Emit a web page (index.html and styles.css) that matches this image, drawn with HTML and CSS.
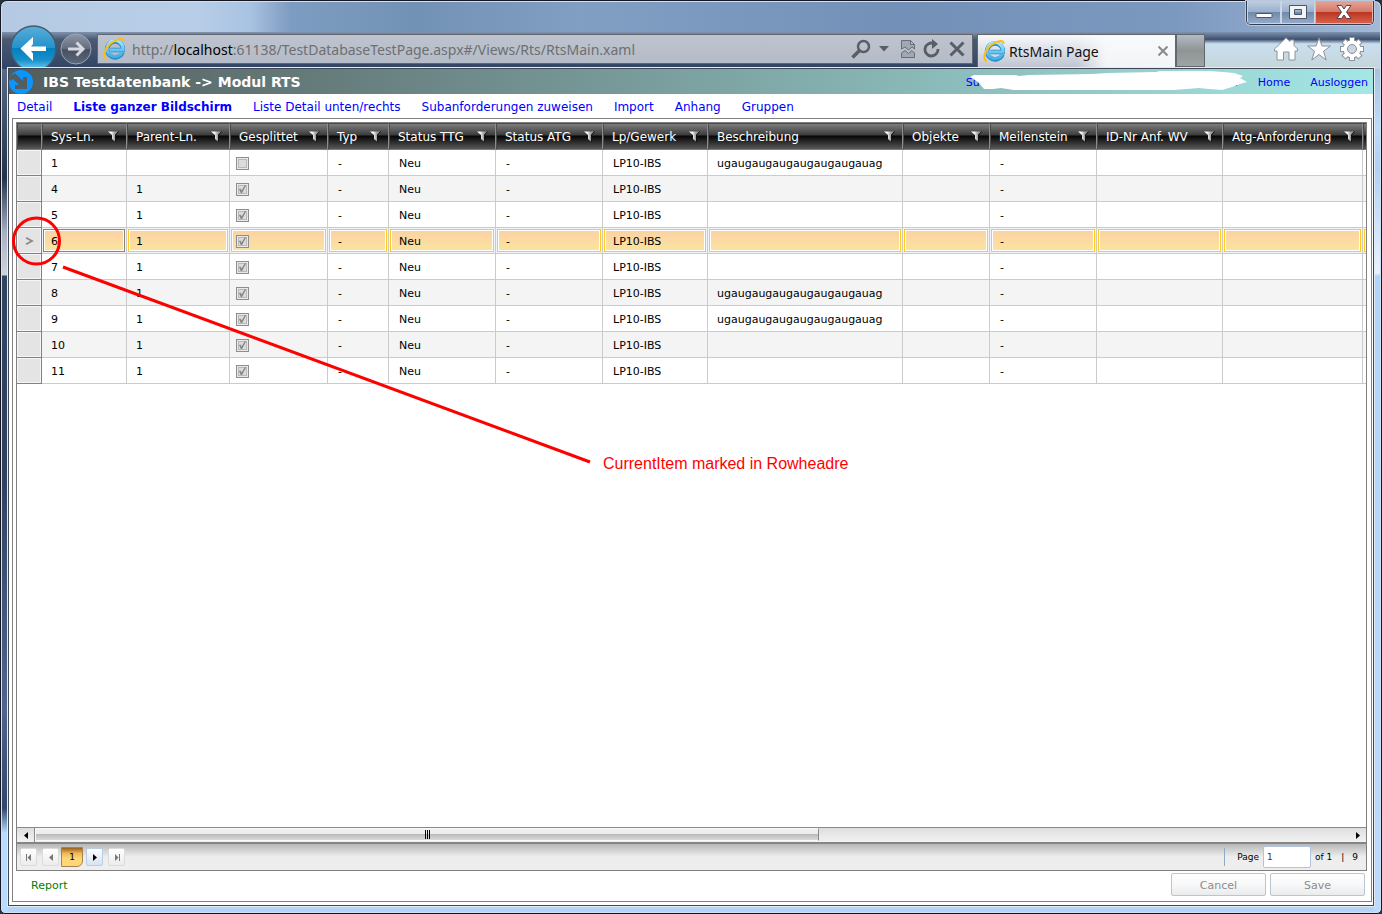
FILE: index.html
```
<!DOCTYPE html>
<html lang="de">
<head>
    <meta charset="UTF-8">
    <meta name="viewport" content="width=device-width, initial-scale=1.0">
    <title>RtsMain Page</title>
    <link rel="stylesheet" href="styles.css">
</head>
<body>
    <!-- Shared icons -->
    <svg class="defs" width="0" height="0" aria-hidden="true">
        <defs>
            <linearGradient id="funnelFill"><stop offset="0.3" stop-color="#fff"/><stop offset="0.7" stop-color="#999"/></linearGradient>
            <linearGradient id="backFill" x2="0" y2="1"><stop offset="0" stop-color="#5aaed8"/><stop offset="0.48" stop-color="#2492cb"/><stop offset="0.5" stop-color="#0480bf"/><stop offset="0.75" stop-color="#1590cb"/><stop offset="1" stop-color="#7fd2f3"/></linearGradient>
            <linearGradient id="forwardFill" x2="0" y2="1"><stop offset="0" stop-color="#8d98a8"/><stop offset="0.5" stop-color="#626b7b"/><stop offset="0.52" stop-color="#465061"/><stop offset="1" stop-color="#5c687c"/></linearGradient>
            <linearGradient id="ieFill" x2="0" y2="1"><stop offset="0" stop-color="#a5e6fd"/><stop offset="1" stop-color="#3fb0ea"/></linearGradient>
            <symbol id="funnel" viewBox="0 0 11 11">
                <path d="M0 0.5h10L7 4v6.500L4 8V4z" fill="url(#funnelFill)"/>
                <path d="M10.500 0.500L7.500 4v7" fill="none" stroke="#111"/>
            </symbol>
            <symbol id="ie" viewBox="0 0 22 22">
                <path d="M19.500 14.500a8 8 0 1 1 .6-3.500v1H7.500" fill="none" stroke="#2b8ccb" stroke-width="4.500"/>
                <path d="M19 14.500a8 8 0 1 1 1-3.500v1H7.500" fill="none" stroke="url(#ieFill)" stroke-width="3"/>
                <path d="M4 20.500C-1 21 1 10 9 4.500 15 .5 21-.5 20.500 4" fill="none" stroke="#f9bf16" stroke-width="2"/>
            </symbol>
        </defs>
    </svg>

    <div class="window">
        <div class="titlebar">
            <div class="caption-buttons">
                <button type="button" class="minimize" aria-label="Minimize">
                    <svg width="18" height="14"><rect x="1" y="8.500" width="16" height="4" rx="1" fill="#fff" stroke="#4c566b"/></svg>
                </button>
                <button type="button" class="maximize" aria-label="Maximize">
                    <svg width="18" height="14"><path d="M.5.5h17v13H.5zM5.500 4.500v5h7v-5z" fill="#f4f4f4" fill-rule="evenodd" stroke="#4c566b"/></svg>
                </button>
                <button type="button" class="close" aria-label="Close">
                    <svg width="16" height="14"><path d="M1 .5h4.500L8 4l2.500-3.500H15L10.500 7l4.500 6.500h-4.500L8 10l-2.500 3.500H1L5.500 7z" fill="#fff" stroke="#5b4150"/></svg>
                </button>
            </div>
        </div>

        <div class="toolbar">
            <button type="button" class="back" aria-label="Back">
                <svg width="47" height="47" viewBox="0 0 47 47">
                    <circle cx="23.500" cy="23.500" r="22.500" fill="url(#backFill)" stroke="#47596f" stroke-width="1.500"/>
                    <path d="M10.500 23.500L23 12v7l-2 2.500h15v4.500H21l2 2.500V36z" fill="#fff"/>
                </svg>
            </button>
            <button type="button" class="forward" aria-label="Forward">
                <svg width="32" height="32" viewBox="0 0 32 32">
                    <circle cx="16" cy="16" r="15" fill="url(#forwardFill)" stroke="#9aa3b1"/>
                    <path d="M8 16h14M16.500 9.500L23 16l-6.500 6.500" fill="none" stroke="#d5d8de" stroke-width="3"/>
                </svg>
            </button>
            <div class="address">
                <svg class="ie-icon" width="22" height="22"><use href="#ie"/></svg>
                <div class="url">http://<b>localhost</b>:61138/TestDatabaseTestPage.aspx#/Views/Rts/RtsMain.xaml</div>
                <button type="button" aria-label="Search">
                    <svg width="20" height="20"><circle cx="12.500" cy="7.500" r="5.500" fill="none" stroke="#585d66" stroke-width="2.500"/><path d="M8.500 11.500L1.500 18.500" stroke="#585d66" stroke-width="3.500"/></svg>
                </button>
                <button type="button" class="dropdown" aria-label="Show address bar history">
                    <svg width="10" height="6"><path d="M0 0h10L5 5.500z" fill="#585d66"/></svg>
                </button>
                <button type="button" aria-label="Compatibility view">
                    <svg width="14" height="18"><path d="M.5 9V.5h9l4 4V9l-2.500-2L7.500 10 4 7zM9.500.5v4h4M.5 17.500V13L4 10.500 7.500 13.500 11 10.500l2.500 2.500v4.500z" fill="#a2a8b1" stroke="#686d76"/></svg>
                </button>
                <button type="button" aria-label="Refresh">
                    <svg width="18" height="20"><path d="M11 4.500A6.500 6.500 0 1 0 15 10" fill="none" stroke="#585d66" stroke-width="2.800"/><path d="M9 0l6 5-6 5z" fill="#585d66"/></svg>
                </button>
                <button type="button" aria-label="Stop">
                    <svg width="16" height="16"><path d="M1.500 1.500l13 13M14.500 1.500l-13 13" stroke="#585d66" stroke-width="3"/></svg>
                </button>
            </div>
            <div class="tab">
                <svg class="ie-icon" width="22" height="22"><use href="#ie"/></svg>
                <span>RtsMain Page</span>
                <button type="button" aria-label="Close tab">
                    <svg width="10" height="10"><path d="M.5.5l9 9M9.500.5l-9 9" stroke="#8a8a8a" stroke-width="2"/></svg>
                </button>
            </div>
            <button type="button" class="new-tab" aria-label="New tab"></button>
            <div class="tools">
                <button type="button" aria-label="Home">
                    <svg width="24" height="24"><path d="M12 .8L16 4.500V3h4v5.500l3.500 3.500v2H21v9h-6v-8H9.500v8H3v-9H.5v-2z" fill="#fff" stroke="#8b939c"/></svg>
                </button>
                <button type="button" aria-label="Favorites">
                    <svg width="24" height="24"><path d="M12 1l3 8h8.500l-7 5.200 2.700 8.800L12 17.500 4.800 23l2.700-8.800L.5 9H9z" fill="#fff" stroke="#8b939c"/></svg>
                </button>
                <button type="button" aria-label="Tools">
                    <svg width="24" height="24">
                        <g stroke="#8b939c" stroke-width="6"><path d="M12 0v24M0 12h24M3.500 3.500l17 17M20.500 3.500l-17 17"/></g>
                        <circle cx="12" cy="12" r="9.500" fill="#8b939c"/>
                        <g stroke="#fff" stroke-width="4"><path d="M12 1v22M1 12h22M4.200 4.200l15.600 15.600M19.800 4.200L4.200 19.800"/></g>
                        <circle cx="12" cy="12" r="8.500" fill="#fff"/>
                        <circle cx="12" cy="12" r="4.500" fill="#c9d6e0" stroke="#8b939c"/>
                    </svg>
                </button>
            </div>
        </div>

        <div class="page">
            <header>
                <svg class="logo" width="24" height="24">
                    <circle cx="12" cy="12" r="12" fill="#0a95ff"/>
                    <path d="M0 9V7l6-4 8 8V7h4v12H6v-4h4L4 9l-2 2z" fill="#545e5e"/>
                </svg>
                <h1>IBS Testdatenbank -&gt; Modul RTS</h1>
                <div class="user">
                    <span>Su</span><span>n</span>
                    <svg width="280" height="22" viewBox="0 0 280 22">
                        <path d="M2 6l4-2h42l3 1 10-1 63-1 16-1 48-1 8-2 20 1 8-1 9-1 8 2 14 1 11 1 9 3-3 2 7 4-7 2-8 3-10 3-13-1-10-1-12 1-13 1H60l-14 0-13-2-8 1-9 0-5-6-5-4z" fill="#fff"/>
                    </svg>
                </div>
                <a href="#home">Home</a>
                <a href="#logout">Ausloggen</a>
            </header>

            <nav>
                <a href="#detail">Detail</a>
                <a href="#liste" class="active">Liste ganzer Bildschirm</a>
                <a href="#liste-detail">Liste Detail unten/rechts</a>
                <a href="#subanforderungen">Subanforderungen zuweisen</a>
                <a href="#import">Import</a>
                <a href="#anhang">Anhang</a>
                <a href="#gruppen">Gruppen</a>
            </nav>

            <main>
                <div class="grid">
                    <div class="grid-view">
                        <table>
                            <colgroup>
                                <col class="c-head"><col class="c-sys"><col class="c-parent"><col class="c-split"><col class="c-typ"><col class="c-status"><col class="c-status"><col class="c-lp"><col class="c-text"><col class="c-obj"><col class="c-status"><col class="c-id"><col class="c-atg"><col class="c-rest">
                            </colgroup>
                            <thead>
                                <tr>
                                    <th></th>
                                    <th><div>Sys-Ln.<svg><use href="#funnel"/></svg></div></th>
                                    <th><div>Parent-Ln.<svg><use href="#funnel"/></svg></div></th>
                                    <th><div>Gesplittet<svg><use href="#funnel"/></svg></div></th>
                                    <th><div>Typ<svg><use href="#funnel"/></svg></div></th>
                                    <th><div>Status TTG<svg><use href="#funnel"/></svg></div></th>
                                    <th><div>Status ATG<svg><use href="#funnel"/></svg></div></th>
                                    <th><div>Lp/Gewerk<svg><use href="#funnel"/></svg></div></th>
                                    <th><div>Beschreibung<svg><use href="#funnel"/></svg></div></th>
                                    <th><div>Objekte<svg><use href="#funnel"/></svg></div></th>
                                    <th><div>Meilenstein<svg><use href="#funnel"/></svg></div></th>
                                    <th><div>ID-Nr Anf. WV<svg><use href="#funnel"/></svg></div></th>
                                    <th><div>Atg-Anforderung<svg><use href="#funnel"/></svg></div></th>
                                    <th></th>
                                </tr>
                            </thead>
                            <tbody>
                                <tr><th></th><td>1</td><td></td><td><input type="checkbox" aria-label="Gesplittet" disabled></td><td>-</td><td>Neu</td><td>-</td><td>LP10-IBS</td><td>ugaugaugaugaugaugaugauag</td><td></td><td>-</td><td></td><td></td><td></td></tr>
                                <tr><th></th><td>4</td><td>1</td><td><input type="checkbox" aria-label="Gesplittet" checked disabled></td><td>-</td><td>Neu</td><td>-</td><td>LP10-IBS</td><td></td><td></td><td>-</td><td></td><td></td><td></td></tr>
                                <tr><th></th><td>5</td><td>1</td><td><input type="checkbox" aria-label="Gesplittet" checked disabled></td><td>-</td><td>Neu</td><td>-</td><td>LP10-IBS</td><td></td><td></td><td>-</td><td></td><td></td><td></td></tr>
                                <tr class="current"><th><svg width="9" height="8"><path d="M1 .8L7 4 1 7.200" fill="none" stroke="#8a8a8a" stroke-width="1.800"/></svg></th><td class="focus">6</td><td>1</td><td><input type="checkbox" aria-label="Gesplittet" checked disabled></td><td>-</td><td>Neu</td><td>-</td><td>LP10-IBS</td><td></td><td></td><td>-</td><td></td><td></td><td></td></tr>
                                <tr><th></th><td>7</td><td>1</td><td><input type="checkbox" aria-label="Gesplittet" checked disabled></td><td>-</td><td>Neu</td><td>-</td><td>LP10-IBS</td><td></td><td></td><td>-</td><td></td><td></td><td></td></tr>
                                <tr><th></th><td>8</td><td>1</td><td><input type="checkbox" aria-label="Gesplittet" checked disabled></td><td>-</td><td>Neu</td><td>-</td><td>LP10-IBS</td><td>ugaugaugaugaugaugaugauag</td><td></td><td>-</td><td></td><td></td><td></td></tr>
                                <tr><th></th><td>9</td><td>1</td><td><input type="checkbox" aria-label="Gesplittet" checked disabled></td><td>-</td><td>Neu</td><td>-</td><td>LP10-IBS</td><td>ugaugaugaugaugaugaugauag</td><td></td><td>-</td><td></td><td></td><td></td></tr>
                                <tr><th></th><td>10</td><td>1</td><td><input type="checkbox" aria-label="Gesplittet" checked disabled></td><td>-</td><td>Neu</td><td>-</td><td>LP10-IBS</td><td></td><td></td><td>-</td><td></td><td></td><td></td></tr>
                                <tr><th></th><td>11</td><td>1</td><td><input type="checkbox" aria-label="Gesplittet" checked disabled></td><td>-</td><td>Neu</td><td>-</td><td>LP10-IBS</td><td></td><td></td><td>-</td><td></td><td></td><td></td></tr>
                            </tbody>
                        </table>
                    </div>

                    <div class="scrollbar">
                        <button type="button" aria-label="Scroll left"><svg width="4" height="7"><path d="M4 0v7L0 3.500z"/></svg></button>
                        <div class="track"><div class="thumb"><svg width="5" height="9"><path d="M.5 0v9M2.500 0v9M4.500 0v9" stroke="#000"/></svg></div></div>
                        <button type="button" aria-label="Scroll right"><svg width="4" height="7"><path d="M0 0v7l4-3.500z"/></svg></button>
                    </div>

                    <div class="pager">
                        <button type="button" aria-label="First page" disabled><svg width="6" height="7"><path d="M0 0h1v7H0zM5 0v7L1.500 3.500z"/></svg></button>
                        <button type="button" aria-label="Previous page" disabled><svg width="4" height="7"><path d="M4 0v7L0 3.500z"/></svg></button>
                        <button type="button" class="number">1</button>
                        <button type="button" class="next" aria-label="Next page"><svg width="4" height="7"><path d="M0 0v7l4-3.500z"/></svg></button>
                        <button type="button" aria-label="Last page" disabled><svg width="6" height="7"><path d="M5 0h1v7H5zM1 0v7l3.500-3.500z"/></svg></button>
                        <div class="page-info">
                            <label for="pageNumber">Page</label>
                            <input type="text" id="pageNumber" value="1">
                            <span>of 1</span>
                            <span class="bar">|</span>
                            <span>9</span>
                        </div>
                    </div>
                </div>

                <footer>
                    <a href="#report">Report</a>
                    <button type="button" disabled>Cancel</button>
                    <button type="button" disabled>Save</button>
                </footer>
            </main>
        </div>
    </div>

    <!-- Markup drawn over the window -->
    <div class="annotation">
        <svg width="600" height="480">
            <circle cx="36.500" cy="241" r="23" fill="none" stroke="#f00" stroke-width="3"/>
            <path d="M63 267L590 462" stroke="#f00" stroke-width="3"/>
        </svg>
        <p>CurrentItem marked in Rowheadre</p>
    </div>
</body>
</html>
```
FILE: styles.css
```
/* Reset */
* {
    margin: 0;
    padding: 0;
    box-sizing: border-box;
}

body {
    font-family: Verdana, 'DejaVu Sans', sans-serif;
    font-size: 11px;
    background: #26303f;
}

button {
    font-family: inherit;
    border: none;
    background: none;
    display: flex;
    align-items: center;
    justify-content: center;
    flex-shrink: 0;
}

svg {
    display: block;
    flex-shrink: 0;
}

a {
    color: #00f;
    text-decoration: none;
}

.defs {
    position: absolute;
}

/* Window frame */
.window {
    display: flex;
    flex-direction: column;
    height: 100vh;
    padding: 0 7px 7px;
    border: 1px solid #15161f;
    border-radius: 7px 7px 5px 5px;
    box-shadow: inset 0 0 0 1px #cfe2f5;
    background:
        linear-gradient(90deg, #b5c9e2 0, #b8cee8 14%, #a9c3e2 18%, #7d9cc1 21%, #7292b5 30%, #819ec3 42%, #7391b8 65%, #7b98bf 85%, #a3b9d6 100%) top / 100% 31px no-repeat,
        linear-gradient(180deg, #7c92ae 0, #3f506d 20%, #c9dff0 32%, #c5d5d8 100%) right 31px / 180px 37px no-repeat,
        linear-gradient(180deg, #7f92ad 0, #4b5a72 20%, #314465 100%) 0 31px / 100% 37px no-repeat,
        linear-gradient(180deg, #596b86 0, #23324a 110px, #a9b1c2 165px, #d0d3dc 207px, #2f4663 208px, #2e405e 400px, #4e6690 640px, #2f4769 740px, #b8dbff 765px) left 67px / 7px 100% no-repeat,
        linear-gradient(180deg, #a9c1dd 0, #bcdcfb 60px, #b0d0f4 100px, #eaf3ff 205px, #b1d4fa 208px, #bbdcff 100%) right 67px / 7px 100% no-repeat,
        #b4d5f8;
}

.titlebar {
    display: flex;
    justify-content: flex-end;
    height: 24px;
}

.caption-buttons {
    display: flex;
    height: 24px;
    border: 1px solid #343d50;
    border-top: none;
    border-radius: 0 0 5px 5px;
    box-shadow: 0 0 0 1px #b8c8de;
    overflow: hidden;
}

.caption-buttons button {
    width: 34px;
    background: linear-gradient(#c0cddf, #9bb0cc 48%, #7088a9 50%, #93aac8);
    border: 1px solid #c9d6e6;
    border-top: none;
}

.caption-buttons .close {
    width: 58px;
    background: linear-gradient(#e6a597, #d4796a 48%, #b93520 50%, #d8604a);
    border-color: #eab2a8;
}

/* Browser toolbar */
.toolbar {
    display: flex;
    align-items: flex-start;
    height: 43px;
    overflow: hidden;
    font-family: 'Segoe UI', 'Noto Sans', sans-serif;
}

.back {
    margin-left: 2px;
}

.forward {
    margin: 8px 5px 0 3px;
}

.address {
    display: flex;
    flex: 1;
    align-items: center;
    gap: 8px;
    min-width: 0;
    height: 30px;
    margin-top: 9px;
    padding: 0 7px 0 5px;
    background: linear-gradient(#bec5d0, #b9bec8 60%, #b5bcc9);
    border: 1px solid #62676f;
}

.address .dropdown {
    margin-right: 4px;
}

.url {
    flex: 1;
    min-width: 0;
    overflow: hidden;
    margin-left: -1px;
    padding-top: 2px;
    white-space: nowrap;
    font-size: 14px;
    line-height: 26px;
    color: #6d6f74;
}

.url b {
    font-weight: normal;
    color: #000;
}

.tab {
    display: flex;
    align-items: center;
    gap: 4px;
    width: 199px;
    height: 33px;
    margin: 9px 0 0 4px;
    padding: 0 7px 0 5px;
    border: 1px solid #62676f;
    border-bottom: none;
    background: linear-gradient(90deg, transparent 50%, rgba(248, 250, 251, 0.9) 65%), linear-gradient(#f7f8fa, #bfc5d2);
    font-size: 14px;
    color: #111;
}

.tab button {
    margin-left: auto;
}

.new-tab {
    width: 29px;
    height: 33px;
    margin-top: 9px;
    background: linear-gradient(#b3bac5, #8f9494 50%, #9ea3a5);
    border: 1px solid #62676f;
}

.tools {
    display: flex;
    gap: 9px;
    margin: 12px 10px 0 69px;
}

/* Page inside the browser */
.page {
    display: flex;
    flex: 1;
    flex-direction: column;
    min-height: 0;
    border: 1px solid #3f4654;
    box-shadow: 0 0 0 1px #e3ecf5;
    background: #fff;
}

header {
    display: flex;
    align-items: center;
    gap: 20px;
    height: 25px;
    padding: 1px 5px 0 0;
    background: linear-gradient(90deg, #535c5c, #a4e7e5);
}

h1 {
    flex: 1;
    margin-left: -10px;
    font-size: 14px;
    color: #fff;
}

.user {
    position: relative;
    display: flex;
    justify-content: space-between;
    width: 272px;
    color: #00f;
}

.user svg {
    position: absolute;
    top: -5px;
    left: 2px;
}

nav {
    display: flex;
    align-items: center;
    gap: 21px;
    height: 24px;
    padding: 2px 0 0 8px;
    font-size: 12px;
}

nav .active {
    font-weight: bold;
}

main {
    display: flex;
    flex: 1;
    flex-direction: column;
    min-height: 0;
    margin: 0 1px 3px 3px;
    padding: 3px 4px 0 3px;
    border: 1px solid #808080;
}

/* Data grid */
.grid {
    display: flex;
    flex: 1;
    flex-direction: column;
    min-height: 0;
    border: 1px solid #808080;
}

.grid-view {
    flex: 1;
    overflow: hidden;
}

table {
    width: 1446px;
    table-layout: fixed;
    border-collapse: separate;
    border-spacing: 0;
}

.c-head { width: 25px; }
.c-sys { width: 85px; }
.c-parent { width: 103px; }
.c-split { width: 98px; }
.c-typ { width: 61px; }
.c-status { width: 107px; }
.c-lp { width: 105px; }
.c-text { width: 195px; }
.c-obj { width: 87px; }
.c-id { width: 126px; }
.c-atg { width: 140px; }
.c-rest { width: 100px; }

thead th {
    height: 27px;
    padding: 0 7px 0 8px;
    font-size: 12px;
    font-weight: normal;
    color: #fff;
    white-space: nowrap;
    background: linear-gradient(#7d7d7d, #3c3c3c 44%, #060606 48%, #1c1c1c 62%, #585858);
    border: 1px solid #4a4a4a;
    border-right-color: #8c8c8c;
    border-bottom-color: #7c7c7c;
}

thead div {
    display: flex;
    align-items: center;
    justify-content: space-between;
}

thead svg {
    width: 11px;
    height: 11px;
}

tbody tr:nth-child(even) {
    background: #f4f4f4;
}

tbody th {
    background: #e4e4e4;
    border-right: 1px solid #808080;
    border-bottom: 1px solid #808080;
    box-shadow: inset 0 0 0 1px #f6f6f6;
}

tbody th svg {
    margin: 0 auto;
}

td {
    height: 26px;
    padding: 2px 9px 0;
    border-right: 1px solid #cbcbcb;
    border-bottom: 1px solid #cbcbcb;
    white-space: nowrap;
}

td:nth-child(n+5) {
    padding-left: 10px;
}

td:nth-child(9) {
    padding-left: 9px;
}

td:nth-child(4) {
    padding-left: 6px;
}

.current td {
    background: linear-gradient(#fccfa5, #fbe69e);
    box-shadow: inset 0 0 0 1px #f4f4f4, inset 0 0 0 2px #ffc92b, inset 0 0 0 3px #fff;
}

.current .focus {
    box-shadow: inset 0 0 0 1px #f4f4f4, inset 0 0 0 2px #848484, inset 0 0 0 3px #fff;
}

td input {
    display: block;
    position: relative;
    width: 13px;
    height: 13px;
    appearance: none;
    background: #dcdcdc;
    border: 1px solid #8e8e8e;
    box-shadow: inset 0 0 0 1px #e8e8e8, inset 0 0 0 2px #b9b9b9;
}

td input:checked::after {
    content: '';
    position: absolute;
    top: 1px;
    left: 2px;
    width: 7px;
    height: 8px;
    background: #858585;
    clip-path: polygon(0 50%, 20% 45%, 38% 68%, 85% 0, 100% 5%, 45% 100%, 25% 100%);
}

/* Scrollbar */
.scrollbar {
    display: flex;
    height: 15px;
    border-top: 1px solid #8a8a8a;
    background: linear-gradient(#dedede, #f2f2f2);
}

.scrollbar button {
    width: 17px;
}

.track {
    flex: 1;
    border-left: 1px solid #8a8a8a;
}

.thumb {
    display: flex;
    align-items: center;
    justify-content: center;
    width: calc(60% - 4px);
    height: 13px;
    border: 1px solid #f8f8f8;
    border-right-color: #8a8a8a;
    background: linear-gradient(#f0f0f0, #ededed 45%, #bcbcbc 50%, #dadada);
}

/* Pager */
.pager {
    display: flex;
    align-items: center;
    gap: 5px;
    height: 28px;
    padding: 0 8px 0 3px;
    font-size: 9px;
    border-top: 2px solid #858585;
    background: linear-gradient(#b8b8b8, #eee 50%);
}

.pager button {
    width: 17px;
    height: 18px;
    background: linear-gradient(#fff, #ececec);
    border: 1px solid #dcdcdc;
    border-radius: 2px;
    fill: #777;
}

.pager .number {
    width: 22px;
    height: 20px;
    margin: 0 -2px 0 -3px;
    font-size: 9px;
    color: #000;
    background: linear-gradient(#96611f, #f0b955 30%, #ffd775 60%);
    border: 1px solid #a58350;
    border-radius: 0 0 6px 0;
}

.pager .next {
    background: linear-gradient(#fdfeff, #d5e3f4);
    border-color: #b9cde4;
    fill: #000;
}

.page-info {
    display: flex;
    align-items: center;
    gap: 4px;
    height: 18px;
    margin-left: auto;
    padding-left: 12px;
    border-left: 1px solid #8fa9c6;
}

.page-info input {
    width: 48px;
    height: 22px;
    padding: 0 3px;
    font: inherit;
    color: #334;
    border: 1px solid #b0c4dc;
    border-radius: 2px;
    background: #fff;
}

.page-info .bar {
    margin: 0 4px 0 5px;
}

/* Footer */
footer {
    display: flex;
    align-items: flex-start;
    gap: 4px;
    height: 30px;
    padding: 2px 2px 0 15px;
}

footer a {
    margin-right: auto;
    line-height: 25px;
    color: #008000;
}

footer button {
    width: 95px;
    height: 23px;
    padding-top: 2px;
    font-size: 11px;
    color: #8c8c8c;
    background: linear-gradient(#fff, #f8f8f9 50%, #e9ebed);
    border: 1px solid #bcc5ce;
    border-radius: 2px;
}

/* Annotation */
.annotation {
    position: absolute;
    top: 0;
    left: 0;
    pointer-events: none;
}

.annotation p {
    position: absolute;
    top: 455px;
    left: 603px;
    font-family: Arial, 'Liberation Sans', sans-serif;
    font-size: 16px;
    white-space: nowrap;
    color: #f00;
}
```
